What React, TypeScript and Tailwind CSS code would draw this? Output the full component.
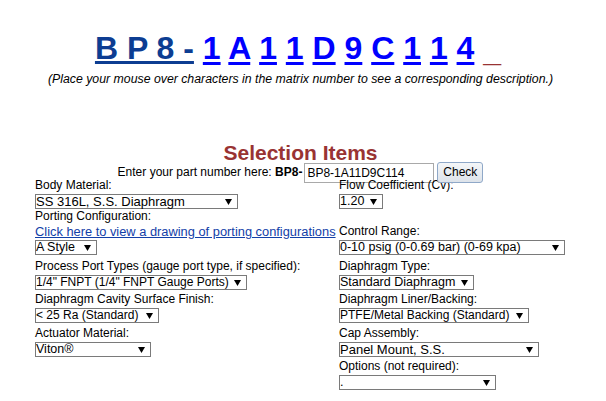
import React from "react";

type Field = { label: string; value: string; w: string; size?: string; link?: string };
type Row = { mt: string; left?: Field; right?: Field };

const matrix = ["1", "A", "1", "1", "D", "9", "C", "1", "1", "4"];

const rows: Row[] = [
  {
    mt: "mt-0",
    left: { label: "Body Material:", value: "SS 316L, S.S. Diaphragm", w: "w-[203px]", size: "text-[13px]" },
    right: { label: "Flow Coefficient (Cv):", value: "1.20", w: "w-[44px]" },
  },
  {
    mt: "mt-0",
    left: {
      label: "Porting Configuration:",
      value: "A Style",
      w: "w-[62px]",
      link: "Click here to view a drawing of porting configurations",
    },
    right: { label: "Control Range:", value: "0-10 psig (0-0.69 bar) (0-69 kpa)", w: "w-[226px]" },
  },
  {
    mt: "mt-[4px]",
    left: {
      label: "Process Port Types (gauge port type, if specified):",
      value: '1/4" FNPT (1/4" FNPT Gauge Ports)',
      w: "w-[212px]",
      size: "text-[12px]",
    },
    right: { label: "Diaphragm Type:", value: "Standard Diaphragm", w: "w-[135px]" },
  },
  {
    mt: "mt-[2px]",
    left: { label: "Diaphragm Cavity Surface Finish:", value: "< 25 Ra (Standard)", w: "w-[124px]", size: "text-[12px]" },
    right: {
      label: "Diaphragm Liner/Backing:",
      value: "PTFE/Metal Backing (Standard)",
      w: "w-[190px]",
      size: "text-[12px]",
    },
  },
  {
    mt: "mt-[3px]",
    left: { label: "Actuator Material:", value: "Viton®", w: "w-[116px]" },
    right: { label: "Cap Assembly:", value: "Panel Mount, S.S.", w: "w-[200px]", size: "text-[13px]" },
  },
  {
    mt: "mt-[2px]",
    right: { label: "Options (not required):", value: ".", w: "w-[157px]" },
  },
];

const SelectBox = ({ value, w, size }: { value: string; w: string; size?: string }) => (
  <div
    className={`${w} ${size ?? "text-[12.5px]"} mt-[1px] h-[15px] border border-[#7a7a7a] bg-white flex items-center justify-between pr-[5px] leading-[13px]`}
  >
    <span className="whitespace-nowrap">{value}</span>
    <svg width="7" height="6" viewBox="0 0 7 6" className="shrink-0">
      <polygon points="0,0 7,0 3.5,6" fill="#000" />
    </svg>
  </div>
);

const Cell = ({ field, bottom }: { field?: Field; bottom?: boolean }) => {
  if (!field) return <div />;
  return (
    <div className={`flex flex-col ${bottom ? "justify-end" : "justify-start"}`}>
      <div className="text-[12px] leading-[15px] whitespace-nowrap">{field.label}</div>
      {field.link && (
        <a className="text-[12.85px] leading-[15px] text-[#1240a8] underline whitespace-nowrap cursor-pointer">
          {field.link}
        </a>
      )}
      <SelectBox value={field.value} w={field.w} size={field.size} />
    </div>
  );
};

export default function App() {
  return (
    <div className="w-[606px] h-[401px] bg-white text-black font-['Liberation_Sans',Arial,sans-serif] overflow-hidden">
      <div className="w-[601px]">
        <div className="h-[67px] pt-[30px] pr-[5px] text-center text-[32px] leading-[37px] font-bold whitespace-nowrap">
          <a className="text-[#0d3d92] underline decoration-[3px] underline-offset-[2px] cursor-pointer">B P 8 -</a>{" "}
          {matrix.map((c, i) => (
            <React.Fragment key={i}>
              <a className="text-[#0000ff] underline decoration-[3px] underline-offset-[3px] cursor-pointer">{c}</a>{" "}
            </React.Fragment>
          ))}
          <span className="text-[#993333] align-[-2px]">_</span>
        </div>
        <p className="mt-[5px] text-center text-[12.3px] leading-[14px] italic whitespace-nowrap">
          (Place your mouse over characters in the matrix number to see a corresponding description.)
        </p>

        <h2 className="mt-[55px] text-center text-[21px] leading-[24px] font-bold text-[#993333]">
          Selection Items
        </h2>
        <div className="mt-[-3px] h-[21px] flex items-center justify-center text-[12px] leading-[15px]">
          <span>
            Enter your part number here: <b>BP8-</b>
          </span>
          <input
            readOnly
            value="BP8-1A11D9C114"
            className="ml-[2px] w-[130px] h-[20px] border border-[#a9a9a9] px-[2px] text-[12px] outline-none"
          />
          <button className="relative z-10 ml-[3px] w-[46px] h-[21px] rounded-[3px] border border-[#8fa8c8] bg-gradient-to-b from-[#f4f6f8] to-[#dde3ea] text-[12px] leading-[15px]">
            Check
          </button>
        </div>
      </div>

      <div className="mt-[-5px] ml-[35px]">
        {rows.map((r, i) => (
          <div key={i} className={`grid grid-cols-[304px_1fr] ${r.mt}`}>
            <Cell field={r.left} />
            <Cell field={r.right} bottom />
          </div>
        ))}
      </div>
    </div>
  );
}
